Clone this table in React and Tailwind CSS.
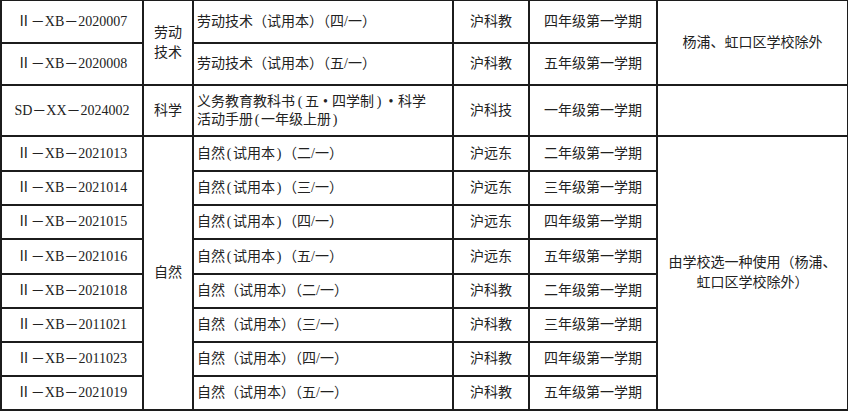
const rows = [
  { code: "Ⅱ－XB－2021013", narrow: true, vol: "二", pub: "沪远东", grade: "二年级第一学期", h: "h-[35px]" },
  { code: "Ⅱ－XB－2021014", narrow: true, vol: "三", pub: "沪远东", grade: "三年级第一学期", h: "h-[34px]" },
  { code: "Ⅱ－XB－2021015", narrow: true, vol: "四", pub: "沪远东", grade: "四年级第一学期", h: "h-[34px]" },
  { code: "Ⅱ－XB－2021016", narrow: true, vol: "五", pub: "沪远东", grade: "五年级第一学期", h: "h-[35px]" },
  { code: "Ⅱ－XB－2021018", narrow: false, vol: "二", pub: "沪科教", grade: "二年级第一学期", h: "h-[34px]" },
  { code: "Ⅱ－XB－2011021", narrow: false, vol: "三", pub: "沪科教", grade: "三年级第一学期", h: "h-[34px]" },
  { code: "Ⅱ－XB－2011023", narrow: false, vol: "四", pub: "沪科教", grade: "四年级第一学期", h: "h-[34px]" },
  { code: "Ⅱ－XB－2021019", narrow: false, vol: "五", pub: "沪科教", grade: "五年级第一学期", h: "h-[34px]" },
];

const cell = "border-2 border-[#1c1c1c] text-center align-middle p-0";
const left = "border-2 border-[#1c1c1c] text-left align-middle pl-[3px] pr-1 py-0";

// half-width bracket / dot as set in the original document
function N({ children, w = "w-[8px]" }) {
  return <span className={`inline-block text-center ${w}`}>{children}</span>;
}

export default function App() {
  return (
    <div className="w-[848px] h-[411px] bg-white overflow-hidden">
      <table
        className="table-fixed border-collapse w-[847px] -mt-px text-[14px] leading-[20px] text-[#222]"
        style={{ fontFamily: '"Liberation Serif", "Noto Sans CJK SC", serif' }}
      >
        <colgroup>
          <col className="w-[142px]" />
          <col className="w-[50px]" />
          <col className="w-[260px]" />
          <col className="w-[76px]" />
          <col className="w-[128px]" />
          <col className="w-[191px]" />
        </colgroup>
        <tbody>
          <tr className="h-[43px]">
            <td className={cell}>Ⅱ－XB－2020007</td>
            <td className={cell} rowSpan={2}>
              劳动
              <br />
              技术
            </td>
            <td className={left}>劳动技术（试用本）（四/一）</td>
            <td className={cell}>沪科教</td>
            <td className={cell}>四年级第一学期</td>
            <td className={cell} rowSpan={2}>杨浦、虹口区学校除外</td>
          </tr>
          <tr className="h-[42px]">
            <td className={cell}>Ⅱ－XB－2020008</td>
            <td className={left}>劳动技术（试用本）（五/一）</td>
            <td className={cell}>沪科教</td>
            <td className={cell}>五年级第一学期</td>
          </tr>
          <tr className="h-[51px]">
            <td className={cell}>SD－XX－2024002</td>
            <td className={cell}>科学</td>
            <td className={`${left} leading-[18px]`}>
              义务教育教科书<N w="w-[10px]">(</N>五<N w="w-[13px]">•</N>四学制<N w="w-[10px]">)</N>
              <N w="w-[14px]">•</N>科学
              <br />
              活动手册<N>(</N>一年级上册<N>)</N>
            </td>
            <td className={cell}>沪科技</td>
            <td className={cell}>一年级第一学期</td>
            <td className={cell}></td>
          </tr>
          {rows.map((r, i) => (
            <tr key={r.code} className={r.h}>
              <td className={cell}>{r.code}</td>
              {i === 0 && (
                <td className={cell} rowSpan={8}>
                  自然
                </td>
              )}
              <td className={left}>
                {r.narrow ? (
                  <>
                    自然<N>(</N>试用本<N>)</N>（{r.vol}/一）
                  </>
                ) : (
                  <>自然（试用本）（{r.vol}/一）</>
                )}
              </td>
              <td className={cell}>{r.pub}</td>
              <td className={cell}>{r.grade}</td>
              {i === 0 && (
                <td className={`${cell} px-2`} rowSpan={8}>
                  由学校选一种使用（杨浦、
                  <br />
                  虹口区学校除外）
                </td>
              )}
            </tr>
          ))}
        </tbody>
      </table>
    </div>
  );
}
